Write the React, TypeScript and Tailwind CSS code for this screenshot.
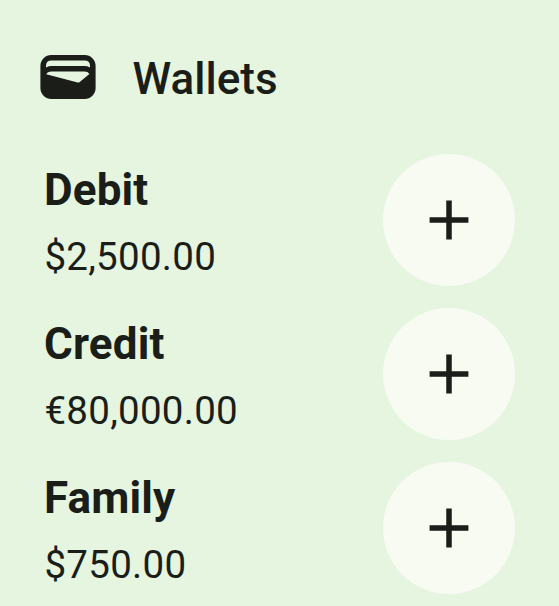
const wallets = [
  { name: "Debit", amount: "$2,500.00" },
  { name: "Credit", amount: "€80,000.00" },
  { name: "Family", amount: "$750.00" },
];

export default function App() {
  return (
    <main className="h-[606px] w-[559px] overflow-hidden bg-[#e5f5e0] font-['Roboto',sans-serif] text-[#1a1d18]">
      <header className="flex h-[154px] items-start pl-10 pt-[55px]">
        <svg width="56" height="44" viewBox="0 0 56 44" aria-hidden="true">
          <rect x="0.4" width="55.2" height="44" rx="11" fill="currentColor" />
          <path d="M6 12.4V11Q6 5.6 11.5 5.6H44.5Q50 5.6 50 11V12.4Q47.5 11 44.5 11H11.5Q8.5 11 6 12.4Z" fill="#e5f5e0" />
          <path d="M6.3 19.2Q7.5 16.6 11.5 16.6H44.5Q48 16.6 49.4 19L39.4 27.2Q38.7 27.8 37.7 27.5Z" fill="#e5f5e0" />
        </svg>
        <h1 className="ml-[36.5px] text-[44px] font-medium leading-[48px]">Wallets</h1>
      </header>
      <ul className="flex flex-col gap-[22px]">
        {wallets.map(({ name, amount }) => (
          <li key={name} className="flex h-[132px] items-center justify-between px-11">
            <div className="pt-2">
              <h2 className="text-[44px] font-bold leading-[66px] tracking-[0.15px]">{name}</h2>
              <p className="pl-[0.4px] text-[38.5px] leading-[68px] tracking-[0.28px]">{amount}</p>
            </div>
            <button aria-label={`Add to ${name}`} className="flex size-[132px] items-center justify-center rounded-full bg-[#f8fbf2]">
              <svg width="40" height="40" viewBox="0 0 40 40" aria-hidden="true">
                <path d="M20 0.6V39.4M0.6 20H39.4" fill="none" stroke="currentColor" strokeWidth="5.5" />
              </svg>
            </button>
          </li>
        ))}
      </ul>
    </main>
  );
}
